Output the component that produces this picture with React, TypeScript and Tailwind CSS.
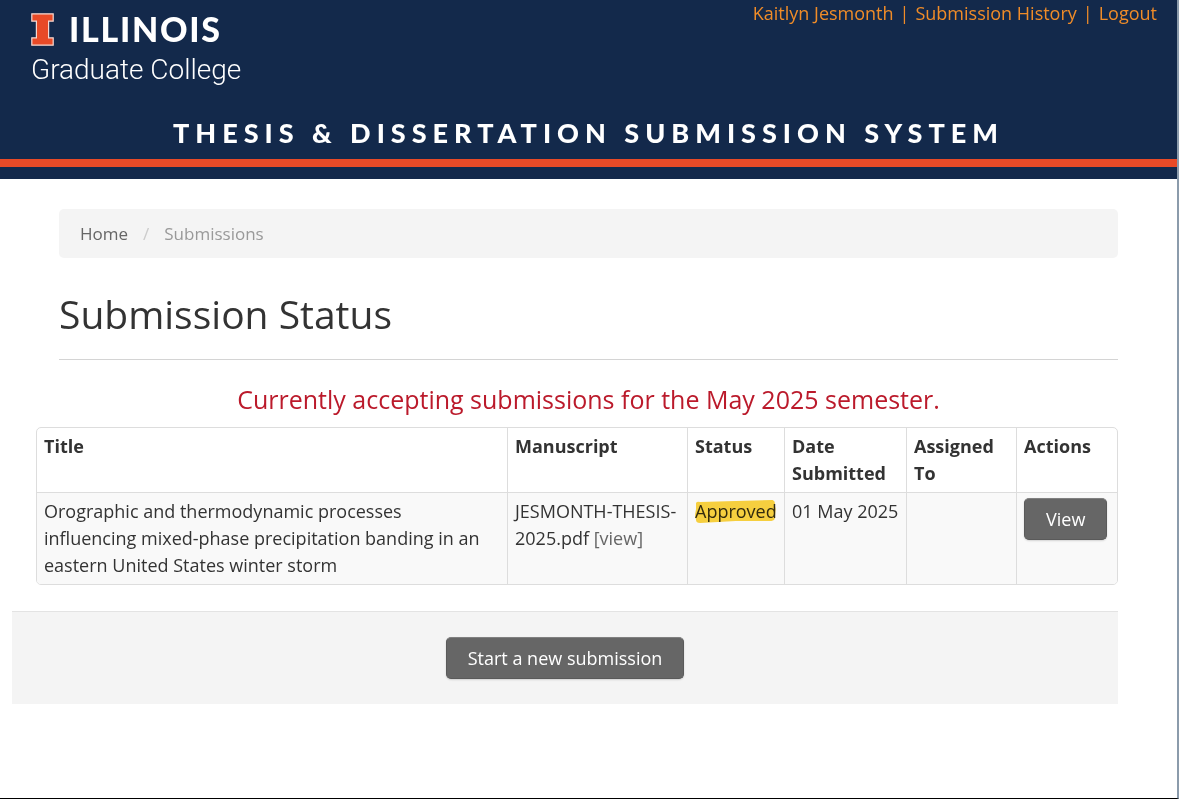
import React from "react";

function BlockI() {
  return (
    <svg viewBox="0 0 23 33" className="h-[33px] w-[23px] shrink-0" aria-hidden="true">
      <path
        d="M0.8 0.8H22.2V8.2H17.6V24.8H22.2V32.2H0.8V24.8H5.4V8.2H0.8Z"
        fill="#e84a27"
        stroke="#f4d9d2"
        strokeWidth="1.2"
      />
    </svg>
  );
}

function Header() {
  return (
    <header className="bg-[#13294b] pb-3">
      <div className="border-b-8 border-[#e84a27]">
        <div className="flex items-start justify-between">
          <a href="#home" className="flex flex-col pl-[31px] pt-3 text-white">
            <span className="flex h-[34px] items-center gap-[15px] font-['Lato',sans-serif] text-[34px] leading-[34px] font-black tracking-wider">
              <BlockI />
              ILLINOIS
            </span>
            <span className="mt-2 font-['Roboto',sans-serif] text-[28px] leading-8 font-light">
              Graduate College
            </span>
          </a>
          <nav className="flex gap-[6px] pr-5 text-[18px] leading-[27px] font-medium text-[#f08c28]">
            <a href="#account">Kaitlyn Jesmonth</a>
            <span>|</span>
            <a href="#history">Submission History</a>
            <span>|</span>
            <a href="#logout">Logout</a>
          </nav>
        </div>
        <p className="mt-[29px] pb-2 text-center font-['Lato',sans-serif] text-[27px] leading-9 font-black tracking-[6px] text-white">
          THESIS &amp; DISSERTATION SUBMISSION SYSTEM
        </p>
      </div>
    </header>
  );
}

function Highlight({ children }: { children: React.ReactNode }) {
  return (
    <span className="relative inline-block">
      {children}
      <svg
        viewBox="0 0 80 24"
        preserveAspectRatio="none"
        className="absolute top-[2px] left-0 h-6 w-full mix-blend-multiply"
        aria-hidden="true"
      >
        <path
          d="M1 3Q2 1 5 2L40 1L76 0Q79 1 78 5L79 9L78 19Q77 21 73 21L40 21L5 23Q1 23 1 20L0 15L1 9Z"
          fill="#fcd440"
        />
      </svg>
    </span>
  );
}

const button =
  "rounded-[5px] border border-[#5a5a5a] border-t-[#808080] bg-[#666] px-[21px] py-[7px] text-[18px] leading-[26px] text-white shadow-[0_1px_2px_rgba(0,0,0,0.15)]";
const cell = "border-t border-l border-[#ddd] px-[7px] py-[5px] text-left align-top";
const titleCell = "border-t border-[#ddd] py-[5px] pr-4 pl-[7px] text-left align-top";

export default function App() {
  return (
    <div className="min-h-screen border-r-2 border-b border-r-[#8b9bab] border-b-black bg-white font-['Open_Sans',sans-serif] text-[18px] leading-[27px] text-[#333]">
      <Header />
      <main className="pt-[30px] pr-[59px] pb-12 pl-[59px]">
        <ol className="flex rounded-[5px] bg-[#f4f4f4] px-[21px] py-[11px] text-[17px] leading-[27px]">
          <li>
            <a href="#home" className="font-medium text-[#666]">
              Home
            </a>
          </li>
          <li className="px-[15px] text-[#ccc]">/</li>
          <li className="font-medium text-[#999]">Submissions</li>
        </ol>

        <h1 className="mt-[31px] border-b border-[#d4d4d4] pb-5 text-[39px] leading-[50px]">
          Submission Status
        </h1>

        <p className="mt-[23px] text-center text-[25px] leading-8 font-medium text-[#bb1a2b]">
          Currently accepting submissions for the May 2025 semester.
        </p>

        <div className="mt-3 -ml-[23px] overflow-hidden rounded-[5px] border border-[#ddd]">
          <table className="-mt-px w-full table-fixed border-separate border-spacing-0">
            <colgroup>
              <col />
              <col className="w-[180px]" />
              <col className="w-[97px]" />
              <col className="w-[122px]" />
              <col className="w-[110px]" />
              <col className="w-[101px]" />
            </colgroup>
            <thead>
              <tr>
                <th className={titleCell}>Title</th>
                <th className={cell}>Manuscript</th>
                <th className={cell}>Status</th>
                <th className={cell}>Date Submitted</th>
                <th className={cell}>Assigned To</th>
                <th className={cell}>Actions</th>
              </tr>
            </thead>
            <tbody className="bg-[#f9f9f9]">
              <tr>
                <td className={titleCell}>
                  Orographic and thermodynamic processes influencing mixed-phase precipitation
                  banding in an eastern United States winter storm
                </td>
                <td className={cell}>
                  JESMONTH-THESIS-
                  <wbr />
                  2025.pdf{" "}
                  <a href="#manuscript" className="text-[#666]">
                    [view]
                  </a>
                </td>
                <td className={cell}>
                  <Highlight>Approved</Highlight>
                </td>
                <td className={cell}>01 May 2025</td>
                <td className={cell}></td>
                <td className={cell}>
                  <button type="button" className={button}>
                    View
                  </button>
                </td>
              </tr>
            </tbody>
          </table>
        </div>

        <div className="mt-[26px] -ml-[47px] flex justify-center border-t border-[#e3e3e3] bg-[#f4f4f4] py-[25px]">
          <button type="button" className={button}>
            Start a new submission
          </button>
        </div>
      </main>
    </div>
  );
}
